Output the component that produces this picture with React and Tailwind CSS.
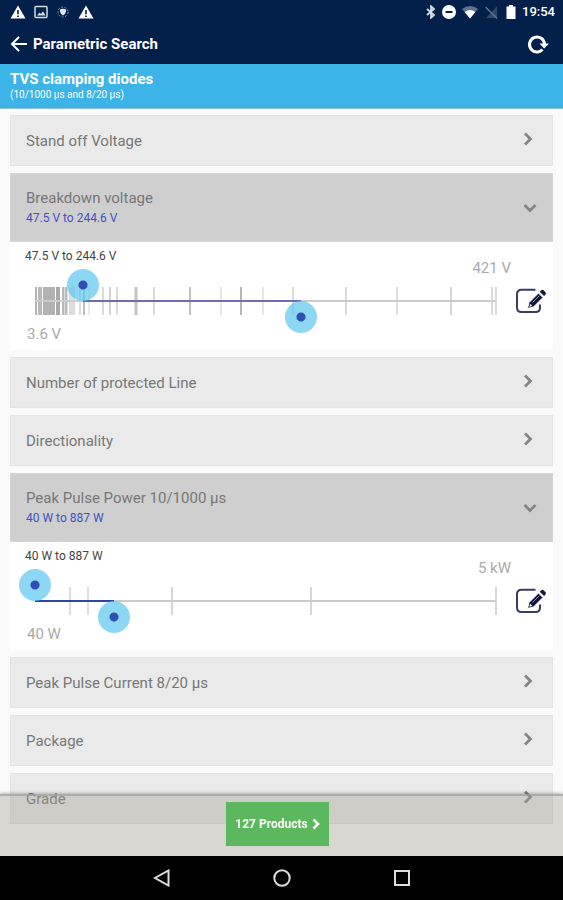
import React, { useState } from 'react';

const groups = [
  { name: 'Stand off Voltage' },
  {
    name: 'Breakdown voltage',
    unit: 'V',
    min: 3.6,
    max: 421,
    minLabel: '3.6 V',
    maxLabel: '421 V',
    from: 47.5,
    to: 244.6,
    lineStyle: 'bg-[#6a6db8]',
    ticks: [
      [4.5, 'w-0.5 bg-[#b4b4b4]'],
      [8, 'w-1 bg-[#b8b8b8]'],
      [16.7, 'w-3 bg-[#b2b2b2]'],
      [24.5, 'w-1 bg-[#a9a9a9]'],
      [29, 'w-0.5 bg-[#b8b8b8]'],
      [32, 'w-[3px] bg-[#bbbbbb]'],
      [37, 'w-1.5 bg-[#dddddd]'],
      [44.6, 'w-px bg-[#bdbdbd]'],
      [48.2, 'w-0.5 bg-[#bdbdbd]'],
      [52.5, 'w-px bg-[#d8d8d8]'],
      [65.2, 'w-px bg-[#b5b5b5]'],
      [71.8, 'w-px bg-[#a5a5a5]'],
      [77.8, 'w-px bg-[#b5b5b5]'],
      [94.8, 'w-[3px] bg-[#c4c4c4]'],
      [111.3, 'w-px bg-[#b5b5b5]'],
      [143.6, 'w-px bg-[#858585]'],
      [171.7, 'w-px bg-[#cccccc]'],
      [189.7, 'w-px bg-[#707070]'],
      [209.8, 'w-px bg-[#cccccc]'],
      [237.2, 'w-px bg-[#b5b5b5]'],
      [285.2, 'w-px bg-[#b5b5b5]'],
      [331.4, 'w-px bg-[#bdbdbd]'],
      [380.5, 'w-px bg-[#b0b0b0]'],
      [417.1, 'w-px bg-[#b5b5b5]'],
      [421, 'w-px bg-[#b5b5b5]'],
    ],
  },
  { name: 'Number of protected Line' },
  { name: 'Directionality' },
  {
    name: 'Peak Pulse Power 10/1000 µs',
    unit: 'W',
    min: 40,
    max: 5000,
    minLabel: '40 W',
    maxLabel: '5 kW',
    from: 40,
    to: 887,
    lineStyle: 'bg-[#2c45a6]',
    ticks: [
      [416, 'w-px bg-[#bdbdbd]'],
      [605, 'w-px bg-[#bdbdbd]'],
      [1514, 'w-px bg-[#b0b0b0]'],
      [3006, 'w-px bg-[#b0b0b0]'],
      [5000, 'w-px bg-[#b0b0b0]'],
    ],
  },
  { name: 'Peak Pulse Current 8/20 µs' },
  { name: 'Package' },
  { name: 'Grade' },
];

const thumbStyle =
  'absolute -inset-x-4 h-8 appearance-none bg-transparent pointer-events-none outline-none [&::-webkit-slider-thumb]:appearance-none [&::-webkit-slider-thumb]:pointer-events-auto [&::-webkit-slider-thumb]:size-8 [&::-webkit-slider-thumb]:rounded-full [&::-webkit-slider-thumb]:bg-[radial-gradient(circle,#2f4fb4_4px,#62c9efbb_5px)]';

const Chevron = ({ open }) => (
  <svg
    viewBox="0 0 14 14"
    className={`size-3.5 shrink-0 ${open ? 'rotate-90' : 'mr-0.5 mb-1'}`}
    fill="none"
    stroke="#858585"
    strokeWidth="2.8"
  >
    <path d="M4 1.5 9.500 7 4 12.500" />
  </svg>
);

const WarningIcon = () => (
  <svg viewBox="0 0 16 14" className="h-3.5 w-4">
    <path d="M8 .5 15.5 13.5H.5Z" fill="#fff" />
    <path d="M7.2 5h1.6v4.3H7.2zM7.2 10.4h1.6V12H7.2z" fill="#02204a" />
  </svg>
);

const EditIcon = () => (
  <svg viewBox="0 0 32 26" className="h-[26px] w-8" fill="none">
    <path
      d="M20.500 1.800H6.500Q2 1.800 2 6.300v13.200Q2 24 6.500 24h14q4.500 0 4.500-4.500V16.500"
      stroke="#3a3d62"
      strokeWidth="2"
    />
    <path d="M12.500 20.500 14 14.500 23.500 5 28 9.500 18.500 19Z" fill="#14163f" stroke="#fff" strokeWidth="1" />
    <path d="M14.300 18.700 15.200 15.800 17.300 17.900Z" fill="#fff" />
    <path d="M17.500 14.500 24.500 7.500" stroke="#8d90ad" />
    <path d="M24.700 3.800 26.300 2.200Q27.500 1.200 28.700 2.300L30.500 4.200Q31.500 5.400 30.400 6.600L29.100 8.100Z" fill="#14163f" />
  </svg>
);

const StatusBar = () => (
  <div className="flex h-6 items-center justify-between pl-2.5 pr-2 text-white">
    <div className="flex items-center gap-2">
      <WarningIcon />
      <svg viewBox="0 0 14 14" className="size-3.5" fill="none">
        <rect x="1" y="1.500" width="12" height="11" rx="1" stroke="#d5dbe5" strokeWidth="1.500" />
        <path d="M3 10.500 5.500 7.500 7 9 9 6.300 11.500 10.500Z" fill="#d5dbe5" />
      </svg>
      <svg viewBox="0 0 14 14" className="size-3.5" fill="none">
        <circle cx="7" cy="7" r="5" stroke="#8696b0" strokeDasharray="2 1.500" />
        <path d="M3.800 4.500Q7 3 10.200 4.500 10 9 7 10.500 4 9 3.800 4.500Z" fill="#e3e8f0" />
      </svg>
      <WarningIcon />
    </div>
    <div className="flex items-center gap-1.5">
      <svg viewBox="0 0 10 14" className="h-3.5 w-2.5" fill="none" stroke="#d8deea" strokeWidth="1.800">
        <path d="M1 4 8 10 5 12.700V1.300L8 4 1 10" />
      </svg>
      <svg viewBox="0 0 14 14" className="size-3.5">
        <circle cx="7" cy="7" r="7" fill="#fff" />
        <path d="M3.500 6h7v2h-7z" fill="#02204a" />
      </svg>
      <svg viewBox="0 0 16 14" className="h-3.5 w-4">
        <path d="M0 4Q8-2 16 4L8 13.500Z" fill="#5f7391" />
        <path d="M2.700 7Q8 3 13.300 7L8 13.500Z" fill="#fff" />
      </svg>
      <svg viewBox="0 0 14 14" className="size-3.5" fill="none">
        <path d="M13 1V13H2L13 1Z" fill="#2f456a" />
        <path d="M1.500 2 13 13.500" stroke="#65738e" strokeWidth="1.500" />
      </svg>
      <svg viewBox="0 0 10 14" className="ml-0.5 h-3.5 w-2.5">
        <path d="M3 0h4v1.500h2.500V14H.5V1.500H3Z" fill="#fff" />
      </svg>
      <span className="text-[13px] leading-4 font-medium">19:54</span>
    </div>
  </div>
);

const RangePanel = ({ group, range, onChange }) => {
  const { min, max, unit } = group;
  const percent = (value) => ((value - min) / (max - min)) * 100;
  const [from, to] = range;

  return (
    <div className="flex items-center bg-white pt-1.5 pb-2 pl-[15px] pr-1.5">
      <div className="flex-1">
        <div className="flex h-7 justify-between">
          <span className="text-xs leading-4 text-[#444444]">
            {from} {unit} to {to} {unit}
          </span>
          <span className="self-end text-[15px] leading-4 text-[#aaaaaa]">{group.maxLabel}</span>
        </div>
        <div className="relative my-[11px] ml-2.5 mr-[15px] h-7">
          {group.ticks.map(([value, style]) => (
            <span
              key={value}
              className={`absolute inset-y-0 -translate-x-1/2 ${style}`}
              style={{ left: `${percent(value)}%` }}
            />
          ))}
          <span className="absolute inset-x-0 top-[13px] h-0.5 bg-[#cccccc]" />
          <span
            className={`absolute top-[13px] h-0.5 ${group.lineStyle}`}
            style={{ left: `${percent(from)}%`, right: `${100 - percent(to)}%` }}
          />
          <input
            type="range"
            aria-label={`${group.name} from`}
            min={min}
            max={max}
            step="any"
            value={from}
            onChange={(e) => onChange([Math.min(Number(e.target.value), to), to])}
            className={`bottom-1/2 ${thumbStyle}`}
          />
          <input
            type="range"
            aria-label={`${group.name} to`}
            min={min}
            max={max}
            step="any"
            value={to}
            onChange={(e) => onChange([from, Math.max(Number(e.target.value), from)])}
            className={`top-1/2 ${thumbStyle}`}
          />
        </div>
        <div className="pl-0.5 text-[15px] leading-4 text-[#aaaaaa]">{group.minLabel}</div>
      </div>
      <button type="button" aria-label={`Edit ${group.name}`} className="ml-1 mt-3">
        <EditIcon />
      </button>
    </div>
  );
};

const FilterGroup = ({ group }) => {
  const [range, setRange] = useState([group.from, group.to]);
  const [open, setOpen] = useState(Boolean(group.ticks));

  if (!group.ticks) {
    return (
      <button
        type="button"
        className="flex h-[51px] w-full items-center justify-between border border-[#e4e4e4] bg-[#eaeaea] px-[15px] text-left text-[15px] leading-5 text-[#777777]"
      >
        {group.name}
        <Chevron />
      </button>
    );
  }

  return (
    <section>
      <button
        type="button"
        onClick={() => setOpen(!open)}
        className="flex h-[69px] w-full items-center justify-between border border-[#d6d6d6] bg-[#cfcfd0] px-[15px] text-left text-[#777777]"
      >
        <span>
          <span className="block text-[15px] leading-5">{group.name}</span>
          <span className="block text-xs leading-5 text-[#3f51c5]">
            {range[0]} {group.unit} to {range[1]} {group.unit}
          </span>
        </span>
        <Chevron open={open} />
      </button>
      {open && <RangePanel group={group} range={range} onChange={setRange} />}
    </section>
  );
};

const App = () => {
  return (
    <div className="min-h-screen bg-[#fafafa] font-[Roboto,sans-serif]">
      <header className="bg-[#02204a] text-white">
        <StatusBar />
        <div className="flex h-10 items-center border-b border-[#0a1a3c] px-2.5">
          <button type="button" aria-label="Back">
            <svg viewBox="0 0 18 18" className="size-[18px]" fill="none" stroke="currentColor" strokeWidth="2">
              <path d="M17 9H2.500M9 2 2 9l7 7" />
            </svg>
          </button>
          <h1 className="ml-[5px] flex-1 text-[15px] leading-5 font-bold">Parametric Search</h1>
          <button type="button" aria-label="Reset" className="mr-1">
            <svg viewBox="0 0 22 20" className="h-5 w-[22px]" fill="none">
              <path d="M15.500 15.600A7.500 7.500 0 1 1 17.500 10" stroke="#fff" strokeWidth="3" />
              <path d="M12.500 9.500H22L17.200 14.500Z" fill="#fff" />
            </svg>
          </button>
        </div>
      </header>

      <div className="h-[45px] border-b border-[#8fbdd4] bg-[#3cb4e7] px-2.5 pt-[5px] text-white">
        <h2 className="text-[15px] leading-5 font-bold">TVS clamping diodes</h2>
        <p className="text-[10px] leading-3">(10/1000 µs and 8/20 µs)</p>
      </div>

      <main className="flex flex-col gap-[7px] px-2.5 pt-1.5 pb-[76px]">
        {groups.map((group) => (
          <FilterGroup key={group.name} group={group} />
        ))}
      </main>

      {/* Result bar and system navigation */}
      <footer className="fixed inset-x-0 bottom-0">
        <div className="flex justify-center border-t-2 border-[#98989499] bg-[#a19f8f61] pt-1.5 pr-2 pb-2.5 shadow-[0_-1px_3px_#00000040]">
          <button
            type="button"
            className="flex h-11 items-center gap-1 bg-[#5cb85c] px-[9px] text-xs leading-4 font-bold text-white"
          >
            127 Products
            <svg viewBox="0 0 8 12" className="h-3 w-2" fill="none" stroke="currentColor" strokeWidth="2.500">
              <path d="M1.500 1.500 6 6l-4.500 4.500" />
            </svg>
          </button>
        </div>
        <nav className="flex h-11 items-center justify-center gap-[102px] bg-black text-[#dddddd]">
          <button type="button" aria-label="Back">
            <svg viewBox="0 0 18 18" className="size-[18px]" fill="none" stroke="currentColor" strokeWidth="2">
              <path d="M15.500 1.500V16.500L2 9Z" />
            </svg>
          </button>
          <button type="button" aria-label="Home">
            <svg viewBox="0 0 18 18" className="size-[18px]" fill="none" stroke="currentColor" strokeWidth="2">
              <circle cx="9" cy="9" r="7.700" />
            </svg>
          </button>
          <button type="button" aria-label="Recent apps">
            <svg viewBox="0 0 18 18" className="size-[18px]" fill="none" stroke="currentColor" strokeWidth="2">
              <path d="M2 2h14v14H2z" />
            </svg>
          </button>
        </nav>
      </footer>
    </div>
  );
};

export default App;
